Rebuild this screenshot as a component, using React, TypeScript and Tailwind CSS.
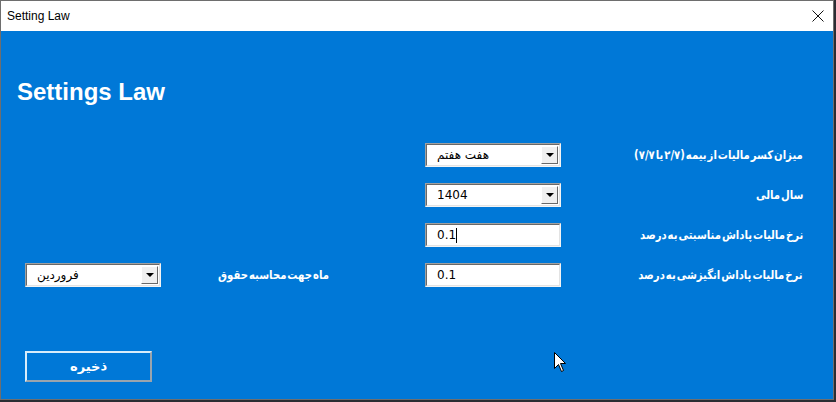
import React from "react";

const persian = { fontFamily: '"DejaVu Sans", sans-serif' };

function Sunken({ children }: { children: React.ReactNode }) {
    return (
        <div className="w-[136px] h-[24px] border border-[#a0a0a0] border-b-[#f4f4f4] border-r-[#f4f4f4]">
            <div className="w-full h-full border border-[#696969] border-b-[#e3e3e3] border-r-[#e3e3e3] bg-white flex items-center">
                {children}
            </div>
        </div>
    );
}

function Combo({ value }: { value: string }) {
    return (
        <Sunken>
            <div className="flex-1 pl-[10px] text-[12px] text-black leading-none" style={persian}>{value}</div>
            <div className="w-[17px] h-[18px] mr-[1px] bg-[#f0f0f0] border border-white border-b-[#696969] border-r-[#696969] flex items-center justify-center">
                <div className="w-0 h-0 border-l-[4px] border-r-[4px] border-t-[4px] border-l-transparent border-r-transparent border-t-black" />
            </div>
        </Sunken>
    );
}

function TextBox({ value, caret }: { value: string; caret?: boolean }) {
    return (
        <Sunken>
            <div className="pl-[10px] text-[12px] text-black leading-none flex items-center" style={persian}>
                {value}
                {caret && <span className="inline-block w-[1px] h-[15px] bg-black" />}
            </div>
        </Sunken>
    );
}

function Label({ text }: { text: string }) {
    return (
        <div
            dir="rtl"
            className="text-white font-bold text-[12px] leading-none whitespace-nowrap scale-x-[0.84] origin-right [word-spacing:-3px]"
            style={persian}
        >
            {text}
        </div>
    );
}

function Row({ left, field, label }: { left?: React.ReactNode; field: React.ReactNode; label: string }) {
    return (
        <div className="flex items-center h-[24px]">
            <div className="w-[424px] h-full flex items-center">{left}</div>
            {field}
            <div className="flex-1 flex justify-end pr-[30px]">
                <Label text={label} />
            </div>
        </div>
    );
}

export default function App() {
    return (
        <div className="w-[836px] h-[402px] bg-[#2a2d33] overflow-hidden">
            <div className="w-[834px] h-[400px] flex flex-col border border-[#6e6e6e] bg-white">
                <div className="h-[30px] bg-white flex items-center justify-between pl-[6px] pr-[8px]">
                    <span className="text-[12px] text-black" style={{ fontFamily: '"Liberation Sans", Arial, sans-serif' }}>Setting Law</span>
                    <svg width="12" height="12" viewBox="0 0 12 12" className="mr-[1px]">
                        <path d="M0.5 0.5 L11.5 11.5 M11.5 0.5 L0.5 11.5" stroke="#111" strokeWidth="1" fill="none" />
                    </svg>
                </div>

                <div className="relative flex-1 bg-[#0078d7] flex flex-col">
                    <h1 className="mt-[47px] ml-[16px] text-[24px] leading-[28px] font-bold text-white" style={{ fontFamily: '"Liberation Sans", Arial, sans-serif' }}>
                        Settings Law
                    </h1>

                    <div className="mt-[37px] flex flex-col gap-[16px]">
                        <Row field={<Combo value="هفت هفتم" />} label="میزان کسر مالیات از بیمه (۲/۷ یا ۷/۷)" />
                        <Row field={<Combo value="1404" />} label="سال مالی" />
                        <Row field={<TextBox value="0.1" caret />} label="نرخ مالیات پاداش مناسبتی به درصد" />
                        <Row
                            left={
                                <>
                                    <div className="ml-[24px]">
                                        <div className="w-[135px]">
                                            <Combo value="فروردین" />
                                        </div>
                                    </div>
                                    <div className="w-[169px] flex justify-end">
                                        <Label text="ماه جهت محاسبه حقوق" />
                                    </div>
                                </>
                            }
                            field={<TextBox value="0.1" />}
                            label="نرخ مالیات پاداش انگیزشی به درصد"
                        />
                    </div>

                    <div className="mt-[64px] ml-[24px]">
                        <button
                            dir="rtl"
                            className="w-[127px] h-[31px] border-2 border-t-[#d8ecfa] border-l-[#d8ecfa] border-b-[#9aa4ad] border-r-[#9aa4ad] text-white font-bold text-[13px] flex items-center justify-center"
                            style={persian}
                        >
                            ذخیره
                        </button>
                    </div>

                    <svg className="absolute left-[553px] top-[321px]" width="13" height="21" viewBox="0 0 13 21">
                        <path d="M0.5 0.5 L0.5 16.5 L4.5 12.5 L7.5 19.5 L9.5 18.5 L6.5 11.5 L11.5 11.5 Z" fill="white" stroke="black" strokeWidth="1" strokeLinejoin="round" />
                    </svg>
                </div>
            </div>
        </div>
    );
}
